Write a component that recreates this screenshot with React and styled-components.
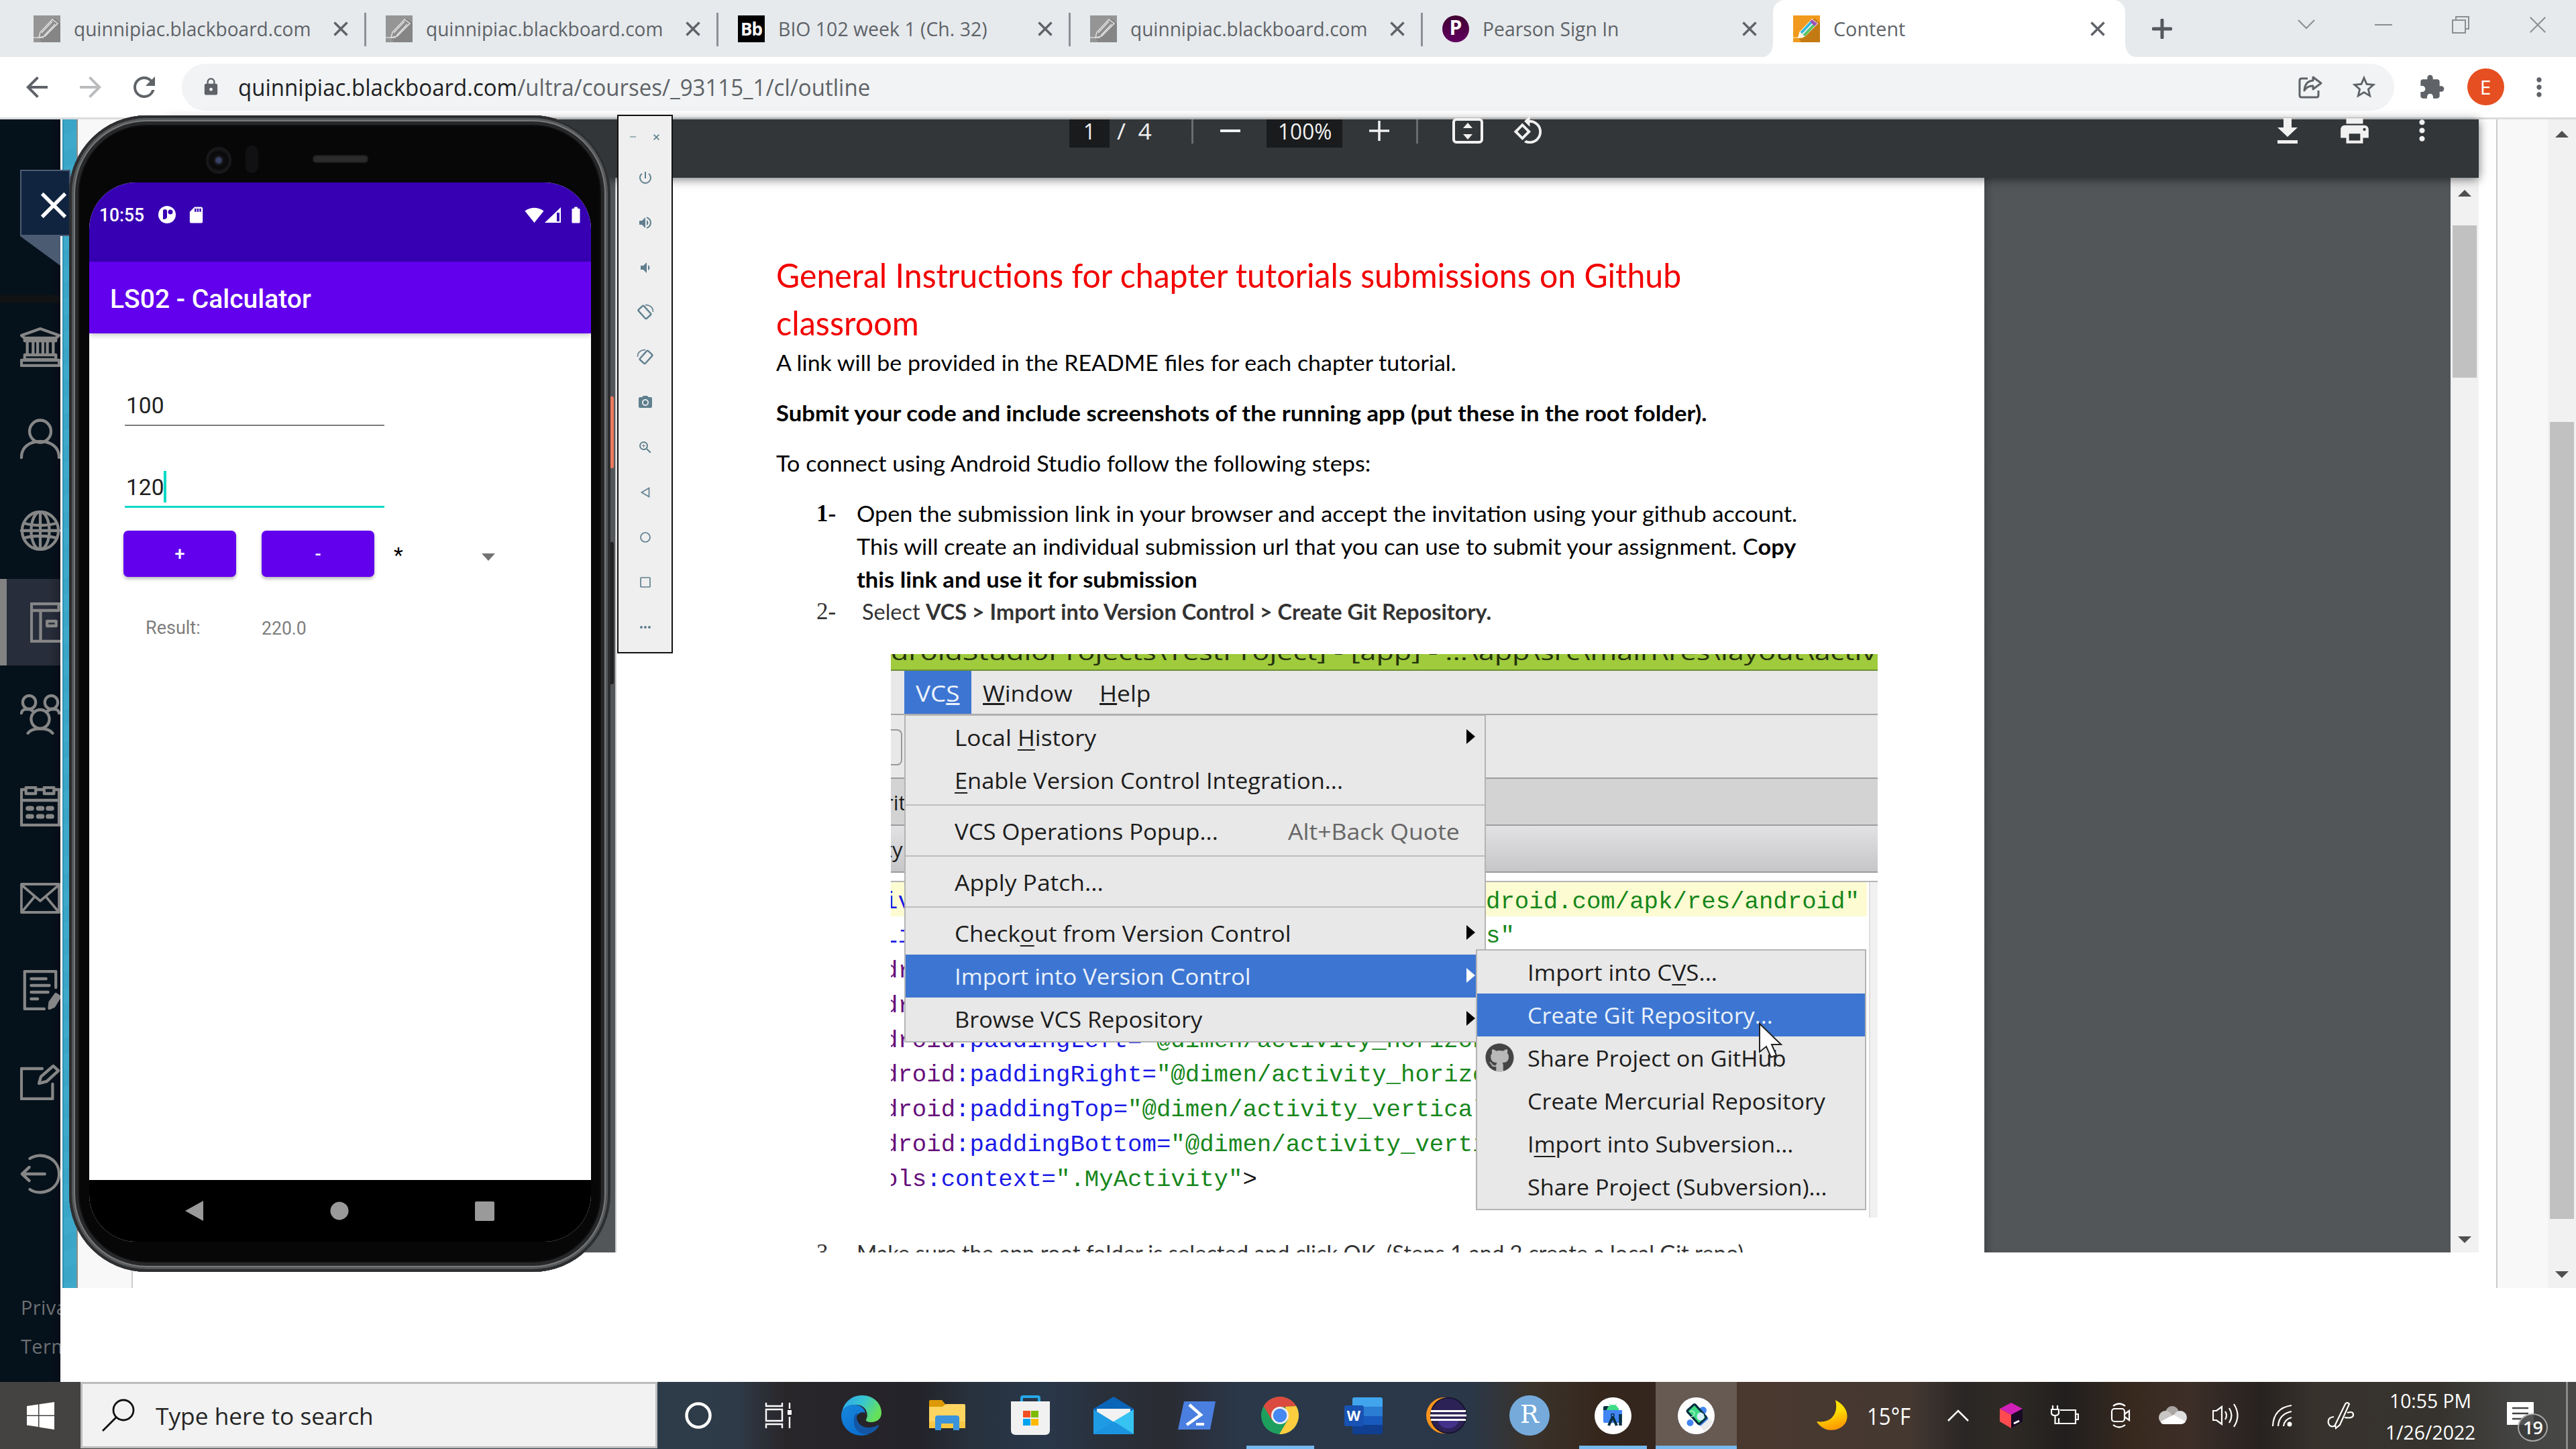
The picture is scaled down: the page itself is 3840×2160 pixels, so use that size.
import React, { useLayoutEffect, useRef, useState } from "react";
import styled, { createGlobalStyle, css } from "styled-components";
import {
  MdPowerSettingsNew, MdVolumeUp, MdVolumeDown, MdCameraAlt, MdZoomIn, MdArrowBack, MdArrowForward,
  MdRefresh, MdLock, MdStarBorder, MdExtension, MdPrint, MdMoreVert, MdMoreHoriz, MdRotate90DegreesCcw,
  MdSignalWifi4Bar, MdSdCard, MdBatteryFull,
} from "react-icons/md";
import { FaGithub } from "react-icons/fa";

const ui = `"Open Sans", "Noto Sans", sans-serif`;

const Global = createGlobalStyle`
  * { box-sizing: border-box; }
  body { margin: 0; background: #fff; font-family: ${ui}; overflow: hidden; }
  svg { display: block; flex: none; }
`;

/* ---------- text that fills a known measure ---------- */
const Measure = styled.span`
  display: block;
  flex: none;
  width: ${(p) => p.$w}px;
  white-space: pre;
`;
const Stretch = styled.span`
  display: inline-block;
  transform-origin: 0 50%;
`;
function Fit({ w, children }) {
  const ref = useRef(null);
  const [k, setK] = useState(1);
  useLayoutEffect(() => {
    const n = ref.current.offsetWidth;
    if (n) setK(w / n);
  }, [w]);
  return (
    <Measure $w={w}>
      <Stretch ref={ref} style={{ transform: `scaleX(${k})` }}>{children}</Stretch>
    </Measure>
  );
}

/* ---------- desktop ---------- */
const Desktop = styled.div`
  position: relative;
  width: 3840px;
  height: 2160px;
  overflow: hidden;
  display: flex;
  flex-direction: column;
`;
const Browser = styled.div`
  height: 2060px;
  display: flex;
  flex-direction: column;
  isolation: isolate;
`;

/* ---------- tab strip ---------- */
const TabStrip = styled.div`
  height: 85px;
  flex: none;
  display: flex;
  background: #e6eaed;
  padding-left: 21px;
`;
const Tab = styled.div`
  position: relative;
  width: 525px;
  height: 85px;
  flex: none;
  display: flex;
  align-items: center;
  padding: 0 27px 0 29px;
  color: #5f6368;
  font-size: 29px;
  line-height: 85px;
  ${(p) => p.$divided && css`
    background: linear-gradient(#8d9196, #8d9196) right 19px / 3px 50px no-repeat;
  `}
  ${(p) => p.$active && css`
    margin-left: -3px;
    background: #fff;
    border-radius: 18px 18px 0 0;
    padding: 0 30px;
    &::before, &::after {
      content: "";
      position: absolute;
      bottom: 0;
      width: 16px;
      height: 20px;
    }
    &::before { left: -16px; background: radial-gradient(ellipse at 0 0, transparent 15.5px, #fff 16.5px); }
    &::after { right: -16px; background: radial-gradient(ellipse at 100% 0, transparent 15.5px, #fff 16.5px); }
  `}
`;
const TabTitle = styled.div`
  flex: 1;
  margin-left: 20px;
`;
const StripButton = styled.div`
  width: ${(p) => p.$w}px;
  height: ${(p) => p.$h || 85}px;
  display: flex;
  align-items: center;
  justify-content: center;
`;
const Spacer = styled.div`
  flex: ${(p) => (p.$w ? "none" : 1)};
  width: ${(p) => p.$w || 0}px;
`;

const Cross = ({ s = 22, c = "#5f6368", t = 3.4 }) => (
  <svg width={s} height={s} viewBox="0 0 22 22" stroke={c} strokeWidth={t}><path d="M1.5 1.5 20.5 20.5M20.5 1.5 1.5 20.5" /></svg>
);
const Pencil = ({ color }) => (
  <svg width="40" height="40" viewBox="0 0 40 40">
    <rect width="40" height="40" fill={color ? "#f19a1f" : "#959595"} />
    <path d="M32 4 40 12V40H12L8 33Z" fill={color ? "#c47a13" : "#858585"} />
    <path d="M0 33H15" stroke={color ? "#f8c36b" : "#c4c4c4"} strokeWidth="2" />
    <path d="M8 33 10 25 28 6 36 12 17 31Z" fill={color ? "#fff1d8" : "#8d8d8d"} stroke={color ? "#fff" : "#e2e2e2"} strokeWidth="1.5" />
    <path d="M12 26 28 9M16 30 32 13" stroke={color ? "#2fb7de" : "#e8e8e8"} strokeWidth={color ? 4 : 1.3} />
    {color && <path d="M16.500 30 32 13.500" stroke="#5dc84d" strokeWidth="3" />}
    {color && <path d="M28 6 36 12 32 16 25 9Z" fill="#a04fb8" />}
  </svg>
);
const BbMark = styled.div`
  width: 40px;
  height: 40px;
  background: #000;
  color: #fff;
  font: 700 26px/40px ${ui};
  letter-spacing: -1px;
  text-align: center;
`;
const Pearson = styled.div`
  width: 40px;
  height: 40px;
  border-radius: 50%;
  background: linear-gradient(#3f0030, #620060);
  color: #fff;
  font: 700 30px/36px ${ui};
  text-align: center;
`;

const tabs = [
  { icon: <Pencil />, title: "quinnipiac.blackboard.com", w: 353 },
  { icon: <Pencil />, title: "quinnipiac.blackboard.com", w: 353 },
  { icon: <BbMark>Bb</BbMark>, title: "BIO 102 week 1 (Ch. 32)", w: 312 },
  { icon: <Pencil />, title: "quinnipiac.blackboard.com", w: 353 },
  { icon: <Pearson>P</Pearson>, title: "Pearson Sign In", w: 203 },
  { icon: <Pencil color />, title: "Content", w: 107 },
];

/* ---------- address bar ---------- */
const AddressRow = styled.div`
  height: 93px;
  flex: none;
  display: flex;
  align-items: center;
  padding: 0 0 1px 15px;
  border-bottom: 3px solid #dbdcde;
  background: #fff;
  color: #5f6368;
`;
const NavButton = styled.div`
  width: ${(p) => p.$w || 80}px;
  display: flex;
  justify-content: center;
  color: ${(p) => (p.$off ? "#babcbe" : "#5f6368")};
`;
const Omnibox = styled.div`
  height: 70px;
  width: 3298px;
  margin-left: 16px;
  border-radius: 35px;
  background: #f1f3f4;
  display: flex;
  align-items: center;
  padding: 0 5px 0 29px;
  font-size: 34.5px;
  line-height: 70px;
  b { font-weight: 400; color: #202124; }
`;
const Avatar = styled.div`
  width: 55px;
  height: 55px;
  border-radius: 50%;
  background: #e64f22;
  color: #fff;
  font: 400 30px/55px ${ui};
  text-align: center;
`;

/* ---------- page ---------- */
const PageArea = styled.div`
  flex: 1;
  display: flex;
  align-items: flex-start;
  background: #fff;
  min-height: 0;
`;
const Sidebar = styled.div`
  width: 90px;
  height: 1882px;
  flex: none;
  overflow: hidden;
  background: linear-gradient(90deg, #05111b 76px, #070d18);
  padding-top: 262px;
`;
const SideRule = styled.div`
  height: 12px;
  background: #111213;
`;
const SideList = styled.div`
  display: flex;
  flex-direction: column;
  gap: 8px;
`;
const SideItem = styled.div`
  height: 129px;
  padding-left: ${(p) => (p.$active ? 35 : 30)}px;
  display: flex;
  align-items: center;
  ${(p) => p.$active && css`
    border-left: 10px solid #828282;
    background: linear-gradient(90deg, #272d3a 64px, #20232f);
  `}
`;
const SideLinks = styled.div`
  margin-top: 106px;
  padding-left: 31px;
  font-size: 29px;
  line-height: 58px;
  white-space: nowrap;
  color: #6c6f72;
  letter-spacing: 0.4px;
`;
const TealEdge = styled.div`
  width: 21px;
  height: 1742px;
  margin-left: 3px;
  flex: none;
  background: repeating-linear-gradient(160deg, #3aa5c7 0 22px, #3ea9cb 22px 46px);
  box-shadow: inset 2px 0 0 #2f93b4;
`;
const Gutter = styled.div`
  width: ${(p) => p.$w}px;
  height: 1742px;
  flex: none;
  background: #f8f8f8;
  border-left: 2px solid ${(p) => p.$edge};
  border-right: ${(p) => (p.$close ? "2px solid #ccc" : "none")};
`;
const Viewer = styled.div`
  width: 3448px;
  height: 1689px;
  margin: 0 26px 0 49px;
  flex: none;
  display: flex;
  flex-direction: column;
  background: #525659;
`;
const ViewerBar = styled.div`
  position: relative;
  z-index: 1;
  height: 87px;
  flex: none;
  display: flex;
  align-items: flex-start;
  background: #323639;
  color: #f1f1f1;
  padding-left: 1347px;
  font-size: 32px;
  line-height: 35px;
  box-shadow: 0 2px 14px rgba(0, 0, 0, 0.55);
`;
const Field = styled.div`
  width: ${(p) => p.$w}px;
  height: 42px;
  background: #191b1c;
  display: flex;
  justify-content: center;
`;
const BarCell = styled.div`
  width: ${(p) => p.$w}px;
  height: 33px;
  display: flex;
  align-items: center;
  justify-content: center;
`;
const BarRule = styled.div`
  width: 3px;
  height: 36px;
  background: #6a6d70;
`;
const ViewerBody = styled.div`
  flex: 1;
  min-height: 0;
  display: flex;
  padding-left: 670px;
`;
const Sheet = styled.div`
  width: 2041px;
  flex: none;
  overflow: hidden;
  background: #fff;
  border-left: 2px solid #c9c9c9;
  padding: 110px 0 0 238px;
`;
const SheetShade = styled.div`
  flex: 1;
  background: linear-gradient(90deg, #46494c, #525659 14px);
`;
const ScrollTrack = styled.div`
  width: 42px;
  height: ${(p) => p.$h}px;
  flex: none;
  background: #f1f1f1;
  display: flex;
  flex-direction: column;
  align-items: center;
  padding: ${(p) => p.$pad};
`;
const Thumb = styled.div`
  width: 36px;
  height: ${(p) => p.$h}px;
  margin: ${(p) => p.$top}px 0 auto;
  background: #c1c1c1;
`;
const Arrow = styled.div`
  width: 0;
  height: 0;
  border: 10px solid transparent;
  border-top-width: ${(p) => (p.$down ? 10 : 0)}px;
  border-bottom-width: ${(p) => (p.$down ? 0 : 10)}px;
  border-${(p) => (p.$down ? "top" : "bottom")}-color: #505050;
`;

/* ---------- document ---------- */
const Heading = styled.div`
  font: 400 50px/71px Lato, sans-serif;
  color: #f20000;
`;
const Para = styled.div`
  font: ${(p) => (p.$bold ? 700 : 400)} 32.5px/48px Lato, sans-serif;
  margin-top: ${(p) => p.$mt || 0}px;
  color: #000;
`;
const Step = styled.div`
  display: flex;
  margin-top: ${(p) => p.$mt || 0}px;
  padding-left: ${(p) => p.$pl}px;
  font: 400 32.5px/${(p) => p.$lh}px Lato, sans-serif;
  color: ${(p) => p.$color || "#000"};
`;
const StepNo = styled.div`
  width: ${(p) => p.$w}px;
  font-family: "Liberation Serif", serif;
  font-size: 35px;
  font-weight: ${(p) => (p.$bold ? 700 : 400)};
`;

/* ---------- embedded IDE picture ---------- */
const Ide = styled.div`
  position: relative;
  width: 1471px;
  height: 840px;
  margin: 39px 0 29px 171px;
  overflow: hidden;
  display: flex;
  flex-direction: column;
  background: #fff;
  color: #1c1c1c;
  font-size: 33.5px;
`;
const IdeTitle = styled.div`
  height: 25px;
  flex: none;
  overflow: hidden;
  background: #9fcb3d;
  border-bottom: 2px solid #6d8f34;
  color: #24310d;
  & > span { margin-top: -25px; line-height: 42px; }
`;
const IdeMenuBar = styled.div`
  height: 66px;
  flex: none;
  display: flex;
  padding-left: 20px;
  background: #e8e8e8;
  border-bottom: 2px solid #a5a5a5;
  line-height: 66px;
`;
const IdeMenu = styled.div`
  padding: 0 18px 0 17px;
  ${(p) => p.$open && css`background: #3d76d2; color: #eef3fb;`}
`;
const IdeStrip = styled.div`
  height: ${(p) => p.$h}px;
  flex: none;
  background: ${(p) => p.$bg};
  border-bottom: 2px solid #9c9c9c;
  line-height: ${(p) => p.$h}px;
  text-indent: -9px;
  font-size: 31px;
`;
const IdeStub = styled.div`
  width: 17px;
  height: 54px;
  margin-top: 21px;
  border: 2px solid #999;
  border-left: 0;
  border-radius: 0 8px 8px 0;
`;
const Editor = styled.div`
  flex: 1;
  margin-top: 12px;
  border-top: 2px solid #b5b5b5;
  box-shadow: inset -11px 0 0 #f1f1f1, inset -13px 0 0 #dedede;
  font: 400 35.7px/51.8px "Liberation Mono", monospace;
  color: #660e7a;
`;
const CodeLine = styled.div`
  display: flex;
  width: 1455px;
  height: 51.8px;
  padding-top: 4px;
  white-space: pre;
  background: ${(p) => (p.$hl ? "#fcfbd2" : "transparent")};
  & > span { margin-left: -11px; }
  i { font-style: normal; color: #1a1ae6; }
  u { text-decoration: none; color: #17871b; }
  b { font-weight: 400; color: #111; }
`;
const CodeTail = styled.div`
  margin-left: auto;
  width: 568px;
  color: #17871b;
`;
const Menu = styled.div`
  position: absolute;
  left: ${(p) => p.$x}px;
  top: ${(p) => p.$y}px;
  width: ${(p) => p.$w}px;
  background: #e8e8e8;
  border: 2px solid #b4b4b4;
  padding-bottom: 1px;
`;
const MenuItem = styled.div`
  position: relative;
  display: flex;
  align-items: center;
  height: 64px;
  padding-left: ${(p) => p.$pl}px;
  line-height: 64px;
  ${(p) => p.$on && css`background: #3d76d2; color: #eaf1fb;`}
  u { text-underline-offset: 5px; text-decoration-thickness: 2px; }
`;
const MenuRule = styled.div`
  height: 12px;
  padding-top: 4px;
  &::after { content: ""; display: block; height: 2px; background: #bdbdbd; }
`;
const SubArrow = styled.div`
  position: absolute;
  left: 836px;
  top: 20px;
  border: 11px solid transparent;
  border-width: 11px 0 11px 13px;
  border-left-color: ${(p) => (p.$on ? "#fff" : "#000")};
`;
const Shortcut = styled.div`
  margin-left: 104px;
  color: #666;
`;
const HubIcon = styled.div`
  position: absolute;
  left: 12px;
  top: 10px;
  border-radius: 50%;
  background: #b9b9b9;
`;
const Pointer = styled.div`
  position: absolute;
  left: 1293px;
  top: 549px;
`;

/* ---------- phone ---------- */
const Phone = styled.div`
  position: absolute;
  left: 103px;
  top: 172px;
  width: 807px;
  height: 1724px;
  padding: 100px 29px 45px 30px;
  border-radius: 116px;
  background: #070708;
  box-shadow: inset 0 0 0 4px #2d2e30, inset 0 0 0 7px #55585a, inset 0 0 0 9px #77797a, inset 0 0 0 14px #27282a, inset 0 0 0 16px #0f0f10;
`;
const SideKey = styled.div`
  position: absolute;
  left: ${(p) => p.$x}px;
  top: ${(p) => p.$y}px;
  width: 7px;
  height: ${(p) => p.$h}px;
  background: ${(p) => p.$c};
  border-radius: 0 3px 3px 0;
`;
const Lens = styled.div`
  position: absolute;
  left: 204px;
  top: 47px;
  width: 38px;
  height: 40px;
  border-radius: 50%;
  background: radial-gradient(circle, #3a4468 0 3px, #111 7px, #08080a 12px, #18181a 17px);
`;
const Sensor = styled.div`
  position: absolute;
  left: 263px;
  top: 45px;
  width: 19px;
  height: 41px;
  border-radius: 10px;
  background: #111113;
`;
const Speaker = styled.div`
  position: absolute;
  left: 363px;
  top: 59px;
  width: 83px;
  height: 12px;
  border-radius: 5px;
  background: #2b2b2c;
  border: 2px solid #1d1d1e;
`;
const Screen = styled.div`
  width: 748px;
  height: 1579px;
  overflow: hidden;
  border-radius: 70px;
  background: #fff;
  font-family: Roboto, sans-serif;
  display: flex;
  flex-direction: column;
`;
const StatusBar = styled.div`
  height: 118px;
  flex: none;
  display: flex;
  align-items: center;
  background: #3700b3;
  color: #fff;
  font-size: 28px;
  font-weight: 500;
  padding: 0 8px 22px 15px;
`;
const AppBar = styled.div`
  height: 107px;
  flex: none;
  padding-left: 31px;
  background: #6200ee;
  color: #fff;
  font-size: 38.5px;
  font-weight: 500;
  line-height: 111px;
  box-shadow: 0 2px 8px rgba(0, 0, 0, 0.25);
`;
const Form = styled.div`
  flex: 1;
  padding: 72px 0 0 51px;
`;
const NumberField = styled.div`
  width: 387px;
  margin: 0 0 0 2px;
  height: ${(p) => p.$h}px;
  padding: ${(p) => p.$pt}px 0 0 2px;
  display: flex;
  font-size: 33.5px;
  line-height: 50px;
  color: #212121;
  border-bottom: ${(p) => (p.$focus ? "3px solid #0bd8c4" : "2px solid #7d7d7d")};
`;
const Caret = styled.div`
  width: 4px;
  height: 47px;
  background: #03dac5;
`;
const Row = styled.div`
  display: flex;
  align-items: center;
  margin-top: ${(p) => p.$mt}px;
`;
const Action = styled.div`
  width: 168px;
  height: 69px;
  margin-right: 38px;
  border-radius: 7px;
  background: #6200ee;
  color: #fff;
  font-size: 27px;
  font-weight: 500;
  line-height: 71px;
  text-align: center;
  box-shadow: 0 3px 5px rgba(0, 0, 0, 0.28);
`;
const Choice = styled.div`
  width: 131px;
  margin-left: -9px;
  padding-top: 5px;
  font-size: 32px;
  line-height: 69px;
`;
const DropMark = styled.div`
  padding-top: 10px;
`;
const ResultText = styled.div`
  font-size: 27px;
  line-height: 40px;
  margin-left: ${(p) => p.$ml}px;
  padding-top: ${(p) => p.$pt}px;
  color: #7e7e7e;
`;
const SysNav = styled.div`
  height: 92px;
  flex: none;
  display: flex;
  justify-content: space-between;
  align-items: center;
  padding: 0 144px 0 143px;
  background: #000;
`;

/* ---------- emulator controls ---------- */
const Controls = styled.div`
  position: absolute;
  left: 920px;
  top: 171px;
  width: 83px;
  height: 803px;
  background: #efefef;
  border: 2px solid #111;
  color: #5f7f8e;
  display: flex;
  flex-direction: column;
`;
const ControlHead = styled.div`
  height: 58px;
  display: flex;
  justify-content: space-between;
  align-items: center;
  padding: 4px 18px 0 17px;
`;
const ControlButton = styled.div`
  height: 67px;
  flex: none;
  display: flex;
  align-items: center;
  justify-content: center;
`;

const CloseFlag = styled.div`
  position: absolute;
  left: 30px;
  top: 253px;
  width: 75px;
  height: 99px;
  padding-left: 28px;
  padding-top: 6px;
  display: flex;
  align-items: center;
  background: #10233f;
  border: 2px solid #4d5b72;
`;
const FlagFold = styled.div`
  position: absolute;
  left: 30px;
  top: 352px;
  width: 60px;
  height: 44px;
  background: #4b5b72;
  clip-path: polygon(0 0, 100% 0, 100% 100%);
`;

/* ---------- taskbar ---------- */
const Taskbar = styled.div`
  height: 100px;
  flex: none;
  display: flex;
  color: #fff;
  background: linear-gradient(90deg, #454341 0, #454341 120px, #2e3c49 980px, #2e3a47 1100px, #29262a 1170px, #242329 1370px, #28323e 1450px, #29374a 1560px, #29303a 1650px, #2a2b33 1740px, #2a3849 1850px, #2a3748 2190px, #3a332c 2280px, #36271d 2380px, #33251d 2480px, #4a392f 2600px, #443831 2850px, #292625 2930px, #2f2a25 2990px, #211f1e 3080px, #38291f 3180px, #3d2f28 3260px, #272220 3370px, #37322c 3450px, #36332e 3640px, #444443 3750px, #484847 3840px);
`;
const Start = styled.div`
  width: 120px;
  display: flex;
  align-items: center;
  justify-content: center;
`;
const Search = styled.div`
  width: 860px;
  height: 99px;
  display: flex;
  align-items: center;
  background: #f2f2f2;
  border: 3px solid #bcbdbd;
  color: #262626;
  font-size: 35.5px;
  line-height: 96px;
  padding-left: 28px;
`;
const Task = styled.div`
  width: ${(p) => p.$w || 124}px;
  height: 100px;
  margin-left: ${(p) => (p.$on ? 2 : 0)}px;
  display: flex;
  align-items: center;
  justify-content: center;
  background: ${(p) => (p.$run ? `linear-gradient(#75b9ee, #75b9ee) center bottom / ${p.$on ? 124 : 101}px 5px no-repeat` : "none")}
    ${(p) => (p.$on ? ", #665a53" : "")};
`;
const Weather = styled.div`
  width: 291px;
  display: flex;
  align-items: center;
  padding-left: 119px;
  gap: 29px;
  font-size: 35.5px;
`;
const TrayCell = styled.div`
  width: ${(p) => p.$w}px;
  display: flex;
  align-items: center;
  justify-content: center;
`;
const Clock = styled.div`
  width: 170px;
  padding-top: 4px;
  display: flex;
  flex-direction: column;
  align-items: center;
  font-size: 29px;
  line-height: 47px;
`;
const Notices = styled.div`
  position: relative;
  width: 120px;
  padding: 30px 0 0 29px;
  border-right: 3px solid #8b8b8a;
`;
const Badge = styled.div`
  position: absolute;
  left: 45px;
  top: 47px;
  width: 45px;
  height: 42px;
  border-radius: 50%;
  background: #3b3b3bdd;
  border: 2px solid #a8a8a8;
  font: 600 27px/38px ${ui};
  letter-spacing: -1px;
  text-align: center;
`;

/* ---------- drawings ---------- */
const Side = ({ h = 60, children }) => (
  <svg width="60" height={h} viewBox={`0 0 62 ${h}`} preserveAspectRatio="none" fill="none" stroke="#868686" strokeWidth="4.4" strokeLinecap="round" strokeLinejoin="round">{children}</svg>
);
const sideIcons = [
  <Side><path d="M2 13 31 3 60 13 55 17H7ZM7 17H55V21H7Z" /><path d="M11 22V41M20 22V41M27 22V41M35 22V41M42 22V41M51 22V41M7 42H55V49H7ZM2 50H60V58H2Z" /></Side>,
  <Side><circle cx="31" cy="19" r="16.500" /><path d="M2 58C2 42 15 34 31 34S60 42 60 58" /></Side>,
  <Side><circle cx="31" cy="30" r="28" /><ellipse cx="31" cy="30" rx="14" ry="28" /><path d="M31 2V58M2 30H60M6 19C20 23 42 23 56 19M6 41C20 37 42 37 56 41" /></Side>,
  <Side><path d="M2 2H60V58H2ZM2 12H44V2M16 12V58M26 28H40V35H26Z" /></Side>,
  <Side><circle cx="14" cy="12" r="10" /><circle cx="48" cy="12" r="10" /><circle cx="31" cy="37" r="14" /><path d="M2 28C3 22 8 22 14 22L20 25M60 28C59 22 54 22 48 22L42 25M12 58C18 49 44 49 50 58" /></Side>,
  <Side><path d="M2 5H60V58H2ZM2 21H60" /><path d="M9 2H24V11H9ZM37 2H52V11H37Z" fill="#05111b" /><path d="M12 33H18M28 33H34M43 33H49M12 45H18M28 45H34M43 45H49" strokeWidth="7" /></Side>,
  <Side h={46}><path d="M2 2H60V44H2ZM2 3 31 27 60 3M3 43 22 21M59 43 40 21" strokeWidth="3.800" /></Side>,
  <Side><path d="M55 26V2H7V58H37M17 13H40M17 23H45M17 33H43M17 43H27" /><path d="M45 57 46 48 55 36 61 40 52 54Z" fill="#868686" /></Side>,
  <Side h={54}><path d="M34 7H2V52H50V30M29 29 32 19 51 3 59 10 41 26Z" /></Side>,
  <Side><path d="M15 7C32-4 60 6 60 30S32 64 15 53M3 30H38M14 20 3 30 14 40" /></Side>,
];

const RotateIcon = ({ flip }) => (
  <svg width="26" height="26" viewBox="0 0 24 24" fill="none" stroke="currentColor" strokeWidth="2.200" transform={flip ? "scale(-1 1)" : undefined}>
    <rect x="6.500" y="3" width="10" height="16.500" rx="1.500" transform="rotate(-42 11.500 12)" />
    <path d="M12 1.500C18 1 23 5 22.500 11" strokeWidth="1.500" />
  </svg>
);
const Outline = ({ d, s = 18 }) => (
  <svg width={s} height={s} viewBox="0 0 18 18" fill="none" stroke="currentColor" strokeWidth="1.700">{d}</svg>
);
const controls = [
  <MdPowerSettingsNew size={24} />, <MdVolumeUp size={24} />, <MdVolumeDown size={24} />,
  <RotateIcon />, <RotateIcon flip />, <MdCameraAlt size={24} />, <MdZoomIn size={24} />,
  <Outline d={<path d="M14.500 2.500V15.500L3.500 9Z" />} />, <Outline d={<circle cx="9" cy="9" r="7" />} />,
  <Outline d={<rect x="2" y="2" width="14" height="14" rx="1" />} />, <MdMoreHoriz size={24} />,
];

const Edge = () => (
  <svg width="60" height="60" viewBox="0 0 60 60">
    <defs>
      <linearGradient id="eg" x1="0" y1="0" x2="1" y2="0.4"><stop offset="0.1" stopColor="#2fa9ea" /><stop offset="0.55" stopColor="#38c6cf" /><stop offset="1" stopColor="#66e05a" /></linearGradient>
      <linearGradient id="eb" x1="0" y1="0" x2="0.6" y2="1"><stop offset="0" stopColor="#1787dc" /><stop offset="1" stopColor="#0b6fd0" /></linearGradient>
    </defs>
    <path d="M1 26C3 11 15 0 31 0 48 0 60 12 60 26c0 9-7 14-15 14-6 0-9-2-8-4 4-5 2-22-15-22C10 14 3 20 1 26Z" fill="url(#eg)" />
    <path d="M0 30C0 20 8 14 19 14c10 0 16 6 17 12-8-3-16 4-15 14 1 8 8 17 20 18C20 65 0 51 0 30Z" fill="url(#eb)" />
    <path d="M24 26C15 30 16 60 40 58c7-2 13-7 16-12 0-2-1-2-2-1C38 52 24 46 23 33Z" fill="#1356a5" />
  </svg>
);
const Folder = () => (
  <svg width="54" height="46" viewBox="0 0 54 46">
    <path d="M0 2Q0 0 2 0H19L24 6V14H0Z" fill="#dd9a04" />
    <path d="M0 10H20L25 6H52Q54 6 54 8V42H0Z" fill="#ffd561" />
    <path d="M0 32H54V42H0Z" fill="#f7c844" />
    <path d="M9 45V27Q9 23 13 23H41Q45 23 45 27V45H36V35H18V45Z" fill="#3b93dc" />
  </svg>
);
const Store = () => (
  <svg width="60" height="60" viewBox="0 0 60 60">
    <path d="M17 13V4Q17 2 19 2H41Q43 2 43 4V13" fill="none" stroke="#25a7e8" strokeWidth="4" />
    <path d="M1 9H59V52Q59 59 52 59H8Q1 59 1 52Z" fill="#f1f1f1" />
    <path d="M19 23H30V33H19Z" fill="#f25022" /><path d="M31 23H42V33H31Z" fill="#7fba00" />
    <path d="M19 35H30V45H19Z" fill="#00a4ef" /><path d="M31 35H42V45H31Z" fill="#ffb900" />
  </svg>
);
const Mail = () => (
  <svg width="60" height="58" viewBox="0 0 60 58">
    <path d="M0 19 30 1 60 19V57H0Z" fill="#0a64b8" />
    <path d="M5 19H55V40H5Z" fill="#f2f2f2" />
    <path d="M0 20 60 57H0Z" fill="#1f9be4" /><path d="M60 20V57L30 38Z" fill="#37c3f2" /><path d="M30 38 60 57H0Z" fill="#1b93df" />
  </svg>
);
const Shell = () => (
  <svg width="56" height="42" viewBox="0 0 56 42">
    <path d="M9 0H56L48 42H0Z" fill="#4a7fe0" />
    <path d="M17 5 34 20 13 35" fill="none" stroke="#fff" strokeWidth="4.500" /><path d="M27 34H39" stroke="#fff" strokeWidth="4" />
  </svg>
);
const Chrome = () => (
  <svg width="56" height="56" viewBox="0 0 56 56">
    <circle cx="28" cy="28" r="28" fill="#1da05e" />
    <path d="M3.700 14A28 28 0 0 1 52.300 14L28 16 16 35Z" fill="#db4a3e" />
    <path d="M52.300 14A28 28 0 0 1 27 56L40 34 36 15Z" fill="#fdcd40" />
    <circle cx="28" cy="28" r="13" fill="#f1f1f1" /><circle cx="28" cy="28" r="10.300" fill="#4688f1" />
  </svg>
);
const WordIcon = styled.div`
  position: relative;
  width: 57px;
  height: 55px;
  padding-left: 12px;
  &::before {
    content: "";
    display: block;
    height: 55px;
    border-radius: 3px;
    background: linear-gradient(#41a5ee 0 25%, #2b7cd3 25% 50%, #185abd 50% 75%, #103f91 75%);
  }
`;
const WordTag = styled.div`
  position: absolute;
  left: 0;
  top: 12px;
  width: 29px;
  height: 31px;
  border-radius: 3px;
  background: #1853b3;
  font: 700 21px/31px ${ui};
  text-align: center;
`;
const Eclipse = () => (
  <svg width="60" height="54" viewBox="0 0 60 54">
    <circle cx="27" cy="27" r="27" fill="#f7941e" /><circle cx="33" cy="27" r="26.300" fill="#2c2255" stroke="#14102b" strokeWidth="1.500" />
    <path d="M17 35H49A17 17 0 0 1 17 35Z" fill="#43318a" />
    <path d="M7 20.500H59M6 27H60M7 33.500H59" stroke="#fff" strokeWidth="3" />
  </svg>
);
const RBall = styled.div`
  width: 60px;
  height: 60px;
  border-radius: 50%;
  background: #75aadb;
  color: #fff;
  font: 400 37px/57px "DejaVu Serif", serif;
  text-align: center;
`;
const Studio = () => (
  <svg width="55" height="55" viewBox="0 0 55 55">
    <circle cx="27.500" cy="27.500" r="27.500" fill="#fff" />
    <rect x="13" y="13" width="9" height="10" rx="2" fill="#073042" />
    <path d="M18.500 19.500C19.500 9 35 9 36 19.500ZM22 9.500 24 13M32.500 9.500 30.500 13" fill="#3ddc84" stroke="#3ddc84" strokeWidth="1" />
    <path d="M13 19H41V36Q41 38 39 38H15Q13 38 13 36Z" fill="#4285f4" />
    <path d="M38.500 25V42" stroke="#073042" strokeWidth="4.500" />
    <path d="M27 29 21 42M27 29 33 42" fill="none" stroke="#073042" strokeWidth="4" /><circle cx="27" cy="26.500" r="2.200" fill="none" stroke="#073042" strokeWidth="1.300" />
  </svg>
);
const Emu = () => (
  <svg width="55" height="55" viewBox="0 0 55 55">
    <circle cx="27.500" cy="27.500" r="27.500" fill="#fff" />
    <path d="M32 42 45 30 52 36Q48 47 39 50Z" fill="#ebebeb" />
    <circle cx="37.500" cy="19.500" r="5.500" fill="#4285f4" /><circle cx="18.500" cy="38" r="5" fill="#4285f4" />
    <rect x="22" y="13" width="17" height="28" rx="2" transform="rotate(-42 30.500 27)" fill="#4285f4" />
    <rect x="20.500" y="11.500" width="15.500" height="27" rx="2" transform="rotate(-42 28.500 25)" fill="#3ddc84" stroke="#073042" strokeWidth="3.200" />
    <ellipse cx="34" cy="28.500" rx="5.500" ry="6" fill="#d7effe" />
    <path d="M18 22Q22 18 25 23 25 28 20 29" fill="none" stroke="#b8f3d2" strokeWidth="1.300" />
  </svg>
);
const tasks = [
  { w: 122, icon: <svg width="42" height="42" viewBox="0 0 42 42"><circle cx="21" cy="21" r="17.500" fill="none" stroke="#fff" strokeWidth="4.500" /></svg> },
  { w: 115, icon: <svg width="40" height="40" viewBox="0 0 40 40" fill="none" stroke="#fff" strokeWidth="2.400"><path d="M2 11H26V28H2ZM2 1V6H26V1M2 39V33H26V39M37 1V10M37 22V39" /><path d="M37 12V19" strokeWidth="6" /></svg> },
  { w: 133, icon: <Edge /> }, { icon: <Folder /> }, { icon: <Store /> }, { icon: <Mail /> }, { icon: <Shell /> },
  { icon: <Chrome />, run: true }, { icon: <WordIcon><WordTag>W</WordTag></WordIcon> }, { icon: <Eclipse /> },
  { icon: <RBall>R</RBall> }, { icon: <Studio />, run: true }, { w: 121, icon: <Emu />, run: true, on: true },
];

const Tray = ({ w = 44, h = 44, sw = 2.2, children }) => (
  <svg width={w} height={h} viewBox={`0 0 ${w} ${h}`} fill="none" stroke="#fff" strokeWidth={sw}>{children}</svg>
);
const tray = [
  [78, <Tray w={34} h={20} sw={2.600}><path d="M2 18 17 3 32 18" /></Tray>],
  [80, <svg width="34" height="38" viewBox="0 0 34 38"><path d="M17 0 34 9 17 18 0 9Z" fill="#d020b8" /><path d="M0 9 17 18V38L0 28Z" fill="#ff4a50" /><path d="M34 9V28L17 38V18Z" fill="#190a26" /><path d="M21 31 29 27" stroke="#fff" strokeWidth="3" /></svg>],
  [80, <Tray w={42} h={32}><path d="M14 8H37V28H12V20M38 14H41V22H38M1 7H12V12Q12 16 6.500 16T1 12ZM3 7V1M10 7V1M6.500 16V28H12" /></Tray>],
  [86, <Tray w={30} h={38}><rect x="2" y="9" width="19" height="19" rx="4" /><path d="M21 17 28 12V26L21 21M4 5Q13-2 22 5M4 33Q13 40 22 33" /></Tray>],
  [70, <svg width="42" height="28" viewBox="0 0 42 28"><circle cx="20" cy="10" r="10" fill="#a9a5a3" /><circle cx="10" cy="17" r="10" fill="#c8c6c5" /><circle cx="32" cy="17" r="10" fill="#dedede" /><path d="M3 23 22 13 40 23Q38 27 32 27H8Q3 27 3 23Z" fill="#fff" /></svg>],
  [90, <Tray w={42} h={38}><path d="M1 12H6L14 6V32L6 26H1ZM19 13Q23 19 19 25M25 8Q32 19 25 30M32 2Q43 19 32 36" /></Tray>],
  [76, <Tray w={34} h={34}><path d="M3 33Q4 6 31 2M11 33Q12 15 31 11M19 33Q20 23 31 20" /><circle cx="28" cy="30" r="3.500" fill="#fff" stroke="none" /></Tray>],
  [98, <Tray w={42} h={42}><path d="M13 35 28 4Q31 0 34 4L20 35 14 40ZM11 23Q1 24 3 33 6 40 13 36M31 17Q40 14 40 20T27 24" /></Tray>],
];

/* ---------- menus ---------- */
const vcsItems = [
  { w: 211, t: <>Local <u>H</u>istory</>, sub: true },
  { w: 579, t: <><u>E</u>nable Version Control Integration...</>, rule: true },
  { w: 393, t: "VCS Operations Popup...", key: "Alt+Back Quote", rule: true },
  { w: 222, t: "Apply Patch...", rule: true },
  { w: 502, t: <>Check<u>o</u>ut from Version Control</>, sub: true },
  { w: 442, t: "Import into Version Control", sub: true, on: true },
  { w: 369, t: "Browse VCS Repository", sub: true },
];
const gitItems = [
  { w: 283, t: <>Import into C<u>V</u>S...</> },
  { w: 366, t: "Create Git Repository...", on: true },
  { w: 386, t: "Share Project on GitHub", hub: true },
  { w: 444, t: "Create Mercurial Repository" },
  { w: 396, t: <>I<u>m</u>port into Subversion...</> },
  { w: 447, t: "Share Project (Subversion)..." },
];

function IdePicture() {
  return (
    <Ide>
      <IdeTitle><Fit w={1469}>{"droidStudioProjects\\TestProject] - [app] - ...\\app\\src\\main\\res\\layout\\activ"}</Fit></IdeTitle>
      <IdeMenuBar>
        <IdeMenu $open><Fit w={65}>VC<u>S</u></Fit></IdeMenu>
        <IdeMenu><Fit w={134}><u>W</u>indow</Fit></IdeMenu>
        <Spacer $w={5} />
        <IdeMenu><Fit w={76}><u>H</u>elp</Fit></IdeMenu>
      </IdeMenuBar>
      <IdeStrip $h={95} $bg="#e8e8e8"><IdeStub /></IdeStrip>
      <IdeStrip $h={70} $bg="#d3d3d3">rit</IdeStrip>
      <IdeStrip $h={70} $bg="linear-gradient(#e2e2e4, #c6c6c8)">ty</IdeStrip>
      <Editor>
        <CodeLine $hl><span><i>iv</i></span><CodeTail>droid.com/apk/res/android"</CodeTail></CodeLine>
        <CodeLine><span><i>Li</i></span><CodeTail>s"</CodeTail></CodeLine>
        <CodeLine><span>dr</span></CodeLine>
        <CodeLine><span>dr</span></CodeLine>
        <CodeLine><span>droid<i>:paddingLeft=</i><u>"@dimen/activity_horizon</u></span></CodeLine>
        <CodeLine><span>droid<i>:paddingRight=</i><u>"@dimen/activity_horizon</u></span></CodeLine>
        <CodeLine><span>droid<i>:paddingTop=</i><u>"@dimen/activity_vertical_</u></span></CodeLine>
        <CodeLine><span>droid<i>:paddingBottom=</i><u>"@dimen/activity_vertic</u></span></CodeLine>
        <CodeLine><span>ols<i>:context=</i><u>".MyActivity"</u><b>&gt;</b></span></CodeLine>
      </Editor>
      <Menu $x={20} $y={90} $w={867}>
        {vcsItems.map((m, i) => (
          <React.Fragment key={i}>
            <MenuItem $pl={73} $on={m.on}>
              <Fit w={m.w}>{m.t}</Fit>
              {m.key && <Shortcut><Fit w={256}>{m.key}</Fit></Shortcut>}
              {m.sub && <SubArrow $on={m.on} />}
            </MenuItem>
            {m.rule && <MenuRule />}
          </React.Fragment>
        ))}
      </Menu>
      <Menu $x={872} $y={440} $w={582}>
        {gitItems.map((m, i) => (
          <MenuItem key={i} $pl={75} $on={m.on}>
            {m.hub && <HubIcon><FaGithub size={43} color="#444" /></HubIcon>}
            <Fit w={m.w}>{m.t}</Fit>
          </MenuItem>
        ))}
      </Menu>
      <Pointer>
        <svg width="38" height="54" viewBox="0 0 38 54"><path d="M2 2V44L12 36 19 52 27 49 20 33H34Z" fill="#fff" stroke="#222" strokeWidth="2" /></svg>
      </Pointer>
    </Ide>
  );
}

function Document() {
  return (
    <Sheet>
      <Heading><Fit w={1349}>General Instructions for chapter tutorials submissions on Github</Fit></Heading>
      <Heading><Fit w={213}>classroom</Fit></Heading>
      <Para><Fit w={1014}>A link will be provided in the README files for each chapter tutorial.</Fit></Para>
      <Para $bold $mt={27}><Fit w={1388}>Submit your code and include screenshots of the running app (put these in the root folder).</Fit></Para>
      <Para $mt={27}><Fit w={886}>To connect using Android Studio follow the following steps:</Fit></Para>
      <Step $mt={26} $pl={60} $lh={49}>
        <StepNo $bold $w={60}>1-</StepNo>
        <div>
          <Fit w={1402}>Open the submission link in your browser and accept the invitation using your github account.</Fit>
          <Fit w={1400}>This will create an individual submission url that you can use to submit your assignment. C<b>opy</b></Fit>
          <Fit w={508}><b>this link and use it for submission</b></Fit>
        </div>
      </Step>
      <Step $pl={60} $lh={47.5} $color="#333">
        <StepNo $w={68}>2-</StepNo>
        <Fit w={938}>Select <b>VCS &gt; Import into Version Control &gt; Create Git Repository.</b></Fit>
      </Step>
      <IdePicture />
      <Step $pl={60} $lh={48} $color="#333">
        <StepNo $w={60}>3-</StepNo>
        <Fit w={1322}>Make sure the app root folder is selected and click OK. (Steps 1 and 2 create a local Git repo)</Fit>
      </Step>
    </Sheet>
  );
}

function Emulator() {
  return (
    <>
      <SideKey $x={908} $y={591} $h={107} $c="#ee7a5d" />
      <SideKey $x={908} $y={808} $h={212} $c="#222223" />
      <Phone>
        <Lens /><Sensor /><Speaker />
        <Screen>
          <StatusBar>
            <Fit w={67}>10:55</Fit>
            <Spacer $w={21} />
            <svg width="26" height="26" viewBox="0 0 26 26"><circle cx="13" cy="13" r="13" fill="#fff" /><path d="M7 20V7Q7 5 10 5T13 8V17Q12 20 7 20Z" fill="#3700b3" /><circle cx="18" cy="9" r="3.500" fill="#3700b3" /></svg>
            <Spacer $w={16} />
            <MdSdCard size={29} />
            <Spacer />
            <MdSignalWifi4Bar size={29} />
            <svg width="27" height="25" viewBox="0 0 27 25"><path d="M1 24 25 1V24Z" fill="#fff" /><path d="M19 9H23V22H19Z" fill="#3700b3" /></svg>
            <Spacer $w={6} />
            <MdBatteryFull size={29} />
          </StatusBar>
          <AppBar><Fit w={300}>LS02 - Calculator</Fit></AppBar>
          <Form>
            <NumberField $h={66} $pt={11}><Fit w={56}>100</Fit></NumberField>
            <NumberField $h={122} $pt={67} $focus><Fit w={56}>120</Fit><Caret /></NumberField>
            <Row $mt={31}>
              <Action>+</Action><Action>-</Action><Choice>*</Choice>
              <DropMark><svg width="20" height="11" viewBox="0 0 20 11"><path d="M0 0H20L10 11Z" fill="#737373" /></svg></DropMark>
            </Row>
            <Row $mt={52}>
              <ResultText $ml={33} $pt={0}><Fit w={82}>Result:</Fit></ResultText>
              <ResultText $ml={91} $pt={3}><Fit w={67}>220.0</Fit></ResultText>
            </Row>
          </Form>
          <SysNav>
            <svg width="28" height="32" viewBox="0 0 28 32"><path d="M0 16 27 1V31Z" fill="#9a9a9a" /></svg>
            <svg width="28" height="28" viewBox="0 0 28 28"><circle cx="14" cy="14" r="13.500" fill="#9a9a9a" /></svg>
            <svg width="29" height="29" viewBox="0 0 29 29"><rect width="29" height="29" rx="2" fill="#9a9a9a" /></svg>
          </SysNav>
        </Screen>
      </Phone>
      <Controls>
        <ControlHead>
          <svg width="9" height="2"><rect width="9" height="2" fill="#9fb0b8" /></svg>
          <Cross s={9} c="#5f7f8e" t={4} />
        </ControlHead>
        {controls.map((c, i) => <ControlButton key={i}>{c}</ControlButton>)}
      </Controls>
    </>
  );
}

export default function App() {
  return (
    <Desktop>
      <Global />
      <Browser>
        <TabStrip>
          {tabs.map((t, i) => (
            <Tab key={i} $active={i === 5} $divided={i < 4}>
              {t.icon}
              <TabTitle><Fit w={t.w}>{t.title}</Fit></TabTitle>
              <Cross />
            </Tab>
          ))}
          <StripButton $w={110}>
            <svg width="30" height="30" viewBox="0 0 30 30" stroke="#55595e" strokeWidth="5" strokeLinecap="round"><path d="M15 2V28M2 15H28" /></svg>
          </StripButton>
          <Spacer $w={103} />
          <StripButton $w={115} $h={73}><svg width="26" height="15" viewBox="0 0 26 15" fill="none" stroke="#8b8e91" strokeWidth="2"><path d="M1 1 13 13 25 1" /></svg></StripButton>
          <StripButton $w={115} $h={73}><svg width="26" height="2"><rect width="26" height="2" fill="#8b8e91" /></svg></StripButton>
          <StripButton $w={115} $h={73}><svg width="26" height="26" viewBox="0 0 26 26" fill="none" stroke="#8b8e91" strokeWidth="2"><path d="M1 6H20V25H1ZM6 6V1H25V19H20" /></svg></StripButton>
          <StripButton $w={115} $h={73}><Cross s={26} c="#8b8e91" t={1.700} /></StripButton>
        </TabStrip>
        <AddressRow>
          <NavButton><MdArrowBack size={48} /></NavButton>
          <NavButton $off><MdArrowForward size={48} /></NavButton>
          <NavButton><MdRefresh size={48} /></NavButton>
          <Omnibox>
            <MdLock size={29} />
            <Spacer $w={26} />
            <Fit w={942}><b>quinnipiac.blackboard.com</b>/ultra/courses/_93115_1/cl/outline</Fit>
            <Spacer />
            <NavButton>
              <svg width="36" height="34" viewBox="0 0 36 34" fill="none" stroke="#5f6368" strokeWidth="3" strokeLinejoin="round"><path d="M14 4H5Q2 4 2 7V29Q2 32 5 32H27Q30 32 30 29V22M22 2 34 11 22 20V15Q13 15 9 22 10 8 22 7Z" /></svg>
            </NavButton>
            <NavButton><MdStarBorder size={42} /></NavButton>
          </Omnibox>
          <Spacer $w={16} />
          <NavButton><MdExtension size={40} /></NavButton>
          <NavButton><Avatar>E</Avatar></NavButton>
          <NavButton><MdMoreVert size={44} /></NavButton>
        </AddressRow>
        <PageArea>
          <Sidebar>
            <SideRule />
            <SideList>
              {sideIcons.map((icon, i) => <SideItem key={i} $active={i === 3}>{icon}</SideItem>)}
            </SideList>
            <SideLinks>Privacy<br />Terms</SideLinks>
          </Sidebar>
          <TealEdge />
          <Gutter $w={84} $edge="#8c8c8c" $close />
          <Viewer>
            <ViewerBar>
              <Field $w={60}>1</Field>
              <Spacer $w={11} />
              <Fit w={52}>/  4</Fit>
              <Spacer $w={59} />
              <BarRule />
              <BarCell $w={109}><svg width="30" height="4"><rect width="30" height="4" fill="#f1f1f1" /></svg></BarCell>
              <Field $w={113}><Fit w={80}>100%</Fit></Field>
              <BarCell $w={110}><svg width="30" height="30" stroke="#f1f1f1" strokeWidth="3.500"><path d="M15 0V30M0 15H30" /></svg></BarCell>
              <BarRule />
              <BarCell $w={148}><svg width="46" height="38" viewBox="0 0 46 38"><rect x="2" y="2" width="42" height="34" rx="4" fill="none" stroke="#f1f1f1" strokeWidth="4" /><path d="M16 15 23 7 30 15ZM16 24H30L23 32Z" fill="#f1f1f1" /></svg></BarCell>
              <BarCell $w={32}><MdRotate90DegreesCcw size={47} /></BarCell>
              <Spacer />
              <BarCell $w={101}><svg width="30" height="38" viewBox="0 0 30 38" fill="#f1f1f1"><path d="M9 0H21V14H30L15 28 0 14H9ZM0 33H30V38H0Z" /></svg></BarCell>
              <BarCell $w={100}><MdPrint size={50} /></BarCell>
              <BarCell $w={100}><MdMoreVert size={49} /></BarCell>
              <Spacer $w={35} />
            </ViewerBar>
            <ViewerBody>
              <Document />
              <SheetShade />
              <ScrollTrack $h={1602} $pad="18px 0 14px"><Arrow /><Thumb $top={43} $h={227} /><Arrow $down /></ScrollTrack>
            </ViewerBody>
          </Viewer>
          <Gutter $w={77} $edge="#ccc" />
          <ScrollTrack $h={1742} $pad="17px 0 15px"><Arrow /><Thumb $top={424} $h={1188} /><Arrow $down /></ScrollTrack>
        </PageArea>
      </Browser>
      <FlagFold />
      <CloseFlag><Cross s={40} c="#fff" t={3} /></CloseFlag>
      <Emulator />
      <Taskbar>
        <Start><svg width="41" height="41" viewBox="0 0 41 41" fill="#fff"><path d="M0 6 17 3.500V19.500H0ZM18.500 3.200 41 0V19.500H18.500ZM0 21H17V37L0 34.500ZM18.500 21H41V41L18.500 37.500Z" /></svg></Start>
        <Search>
          <svg width="50" height="50" viewBox="0 0 50 50" fill="none" stroke="#111" strokeWidth="2.800"><circle cx="33" cy="17" r="15" /><path d="M22 28 2 48" /></svg>
          <Spacer $w={31} />
          <Fit w={325}>Type here to search</Fit>
        </Search>
        {tasks.map((t, i) => <Task key={i} $w={t.w} $run={t.run} $on={t.on}>{t.icon}</Task>)}
        <Weather>
          <svg width="46" height="46" viewBox="0 0 46 46"><defs><linearGradient id="mo" x1="0" y1="0" x2="0.300" y2="1"><stop offset="0.500" stopColor="#ffe000" /><stop offset="1" stopColor="#ff9d00" /></linearGradient></defs><path d="M28 0C42 7 49 20 44 32 38 46 12 52 0 32 22 35 33 20 28 0Z" fill="url(#mo)" /></svg>
          <Fit w={65}>15°F</Fit>
        </Weather>
        {tray.map(([w, icon], i) => <TrayCell key={i} $w={w}>{icon}</TrayCell>)}
        <Clock><Fit w={122}>10:55 PM</Fit><Fit w={134}>1/26/2022</Fit></Clock>
        <Notices>
          <svg width="40" height="34" viewBox="0 0 40 34"><path d="M0 0H40V34H0Z" fill="#fff" /><path d="M8 9H32M8 17H32M8 25H24" stroke="#444" strokeWidth="2.500" /></svg>
          <Badge>19</Badge>
        </Notices>
      </Taskbar>
    </Desktop>
  );
}
